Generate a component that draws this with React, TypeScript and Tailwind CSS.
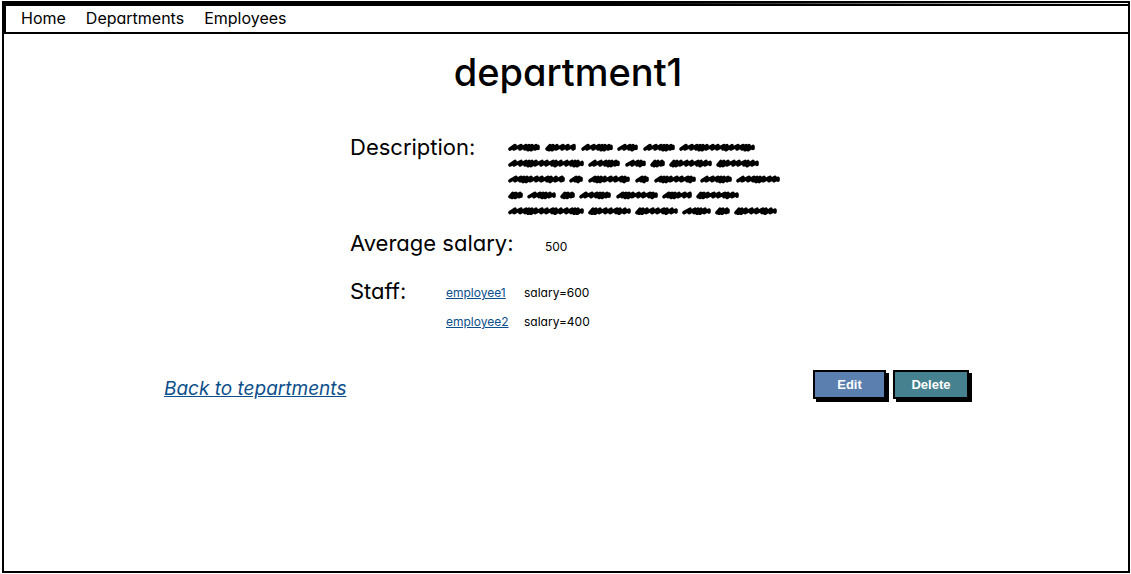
import type { ReactNode } from 'react';

const lines: [number, number][][] = [
  [[0, 32], [37, 68], [73, 105], [109, 130], [135, 167], [171, 247]],
  [[0, 76], [80, 112], [117, 138], [142, 157], [161, 204], [208, 251]],
  [[0, 57], [61, 75], [80, 122], [127, 141], [146, 188], [192, 224], [228, 272]],
  [[0, 15], [19, 48], [52, 67], [71, 103], [108, 150], [154, 184], [188, 231]],
  [[0, 76], [80, 123], [127, 170], [174, 203], [207, 222], [226, 269]],
];

const steps = [5, 6, 5, 3, 3, 4, 6, 5, 6, 3];

function scribble(start: number, end: number, y: number) {
  let x = start + 2;
  let i = Math.round(end - start) % 4;
  let d = `M${x} ${y + 1.5}`;
  while (x < end - 6) {
    const step = steps[i % steps.length];
    const low = step === 3 ? 2.3 : 1.5;
    d += `L${x + step} ${y - 1.9}L${x + step - 1} ${y + low}`;
    x += step;
    i += 1;
  }
  return `${d}L${end - 2} ${y - 1}L${end - 2} ${y + 1}`;
}

function Scribbles() {
  return (
    <svg width="272" height="72" viewBox="0 0 272 72" role="img" aria-label="Description text" className="shrink-0">
      {lines.map((words, row) =>
        words.map(([a, b]) => (
          <path
            key={`${row}-${a}`}
            d={scribble(a, b, 4.5 + row * 15.9)}
            fill="none"
            stroke="#000"
            strokeWidth="3.6"
            strokeLinecap="round"
            strokeLinejoin="round"
          />
        )),
      )}
    </svg>
  );
}

function ActionButton({ color, children }: { color: string; children: ReactNode }) {
  return (
    <button
      type="button"
      className={`h-[29px] border-2 border-black text-[13px] font-bold text-white font-['Liberation_Sans',sans-serif] shadow-[3px_3px_0_#000] ${color}`}
    >
      {children}
    </button>
  );
}

const staff = [
  { name: 'employee1', salary: 600 },
  { name: 'employee2', salary: 400 },
];

export default function App() {
  return (
    <div className="flex min-h-screen flex-col bg-white pt-px pr-px pb-px pl-0.5 text-black font-['Inter',sans-serif] [font-feature-settings:'cv11']">
      <div className="flex grow flex-col border-2 border-black">
        <div className="h-px bg-linear-to-r from-black via-black to-white" />
        <nav className="flex h-[30px] items-center gap-5 border-t-2 border-b-2 border-l-2 border-black pb-0.5 pl-[15px] text-[16px]">
          <a href="#home">Home</a>
          <a href="#departments">Departments</a>
          <a href="#employees">Employees</a>
        </nav>
        <main className="mx-auto w-full max-w-[812px] pt-3 pl-1">
          <h1 className="text-center text-[38px] leading-[52px] font-medium">department1</h1>
          <dl className="mt-[33px] pl-[186px]">
            <div className="flex h-24">
              <dt className="w-[158px] text-[22px] leading-8">Description:</dt>
              <dd className="pt-3">
                <Scribbles />
              </dd>
            </div>
            <div className="flex h-12">
              <dt className="w-[195px] text-[22px] leading-8">Average salary:</dt>
              <dd className="text-[12px] leading-10">500</dd>
            </div>
            <div className="flex h-[95px]">
              <dt className="w-24 text-[22px] leading-8">Staff:</dt>
              <dd className="pt-1">
                <ul className="text-[12px]">
                  {staff.map((person) => (
                    <li key={person.name} className="flex h-[29px] leading-7">
                      <a href={`#${person.name}`} className="w-[78px] text-[#0b4f8c] underline">
                        {person.name}
                      </a>
                      <span>salary={person.salary}</span>
                    </li>
                  ))}
                </ul>
              </dd>
            </div>
          </dl>
          <div className="flex items-start justify-between">
            <a href="#departments" className="text-[19px] leading-[38px] text-[#0b4f8c] italic underline">
              Back to tepartments
            </a>
            <div className="flex gap-[7px] pr-[3px]">
              <ActionButton color="bg-[#5b7fae] w-[73px]">Edit</ActionButton>
              <ActionButton color="bg-[#45818e] w-[76px]">Delete</ActionButton>
            </div>
          </div>
        </main>
      </div>
    </div>
  );
}
